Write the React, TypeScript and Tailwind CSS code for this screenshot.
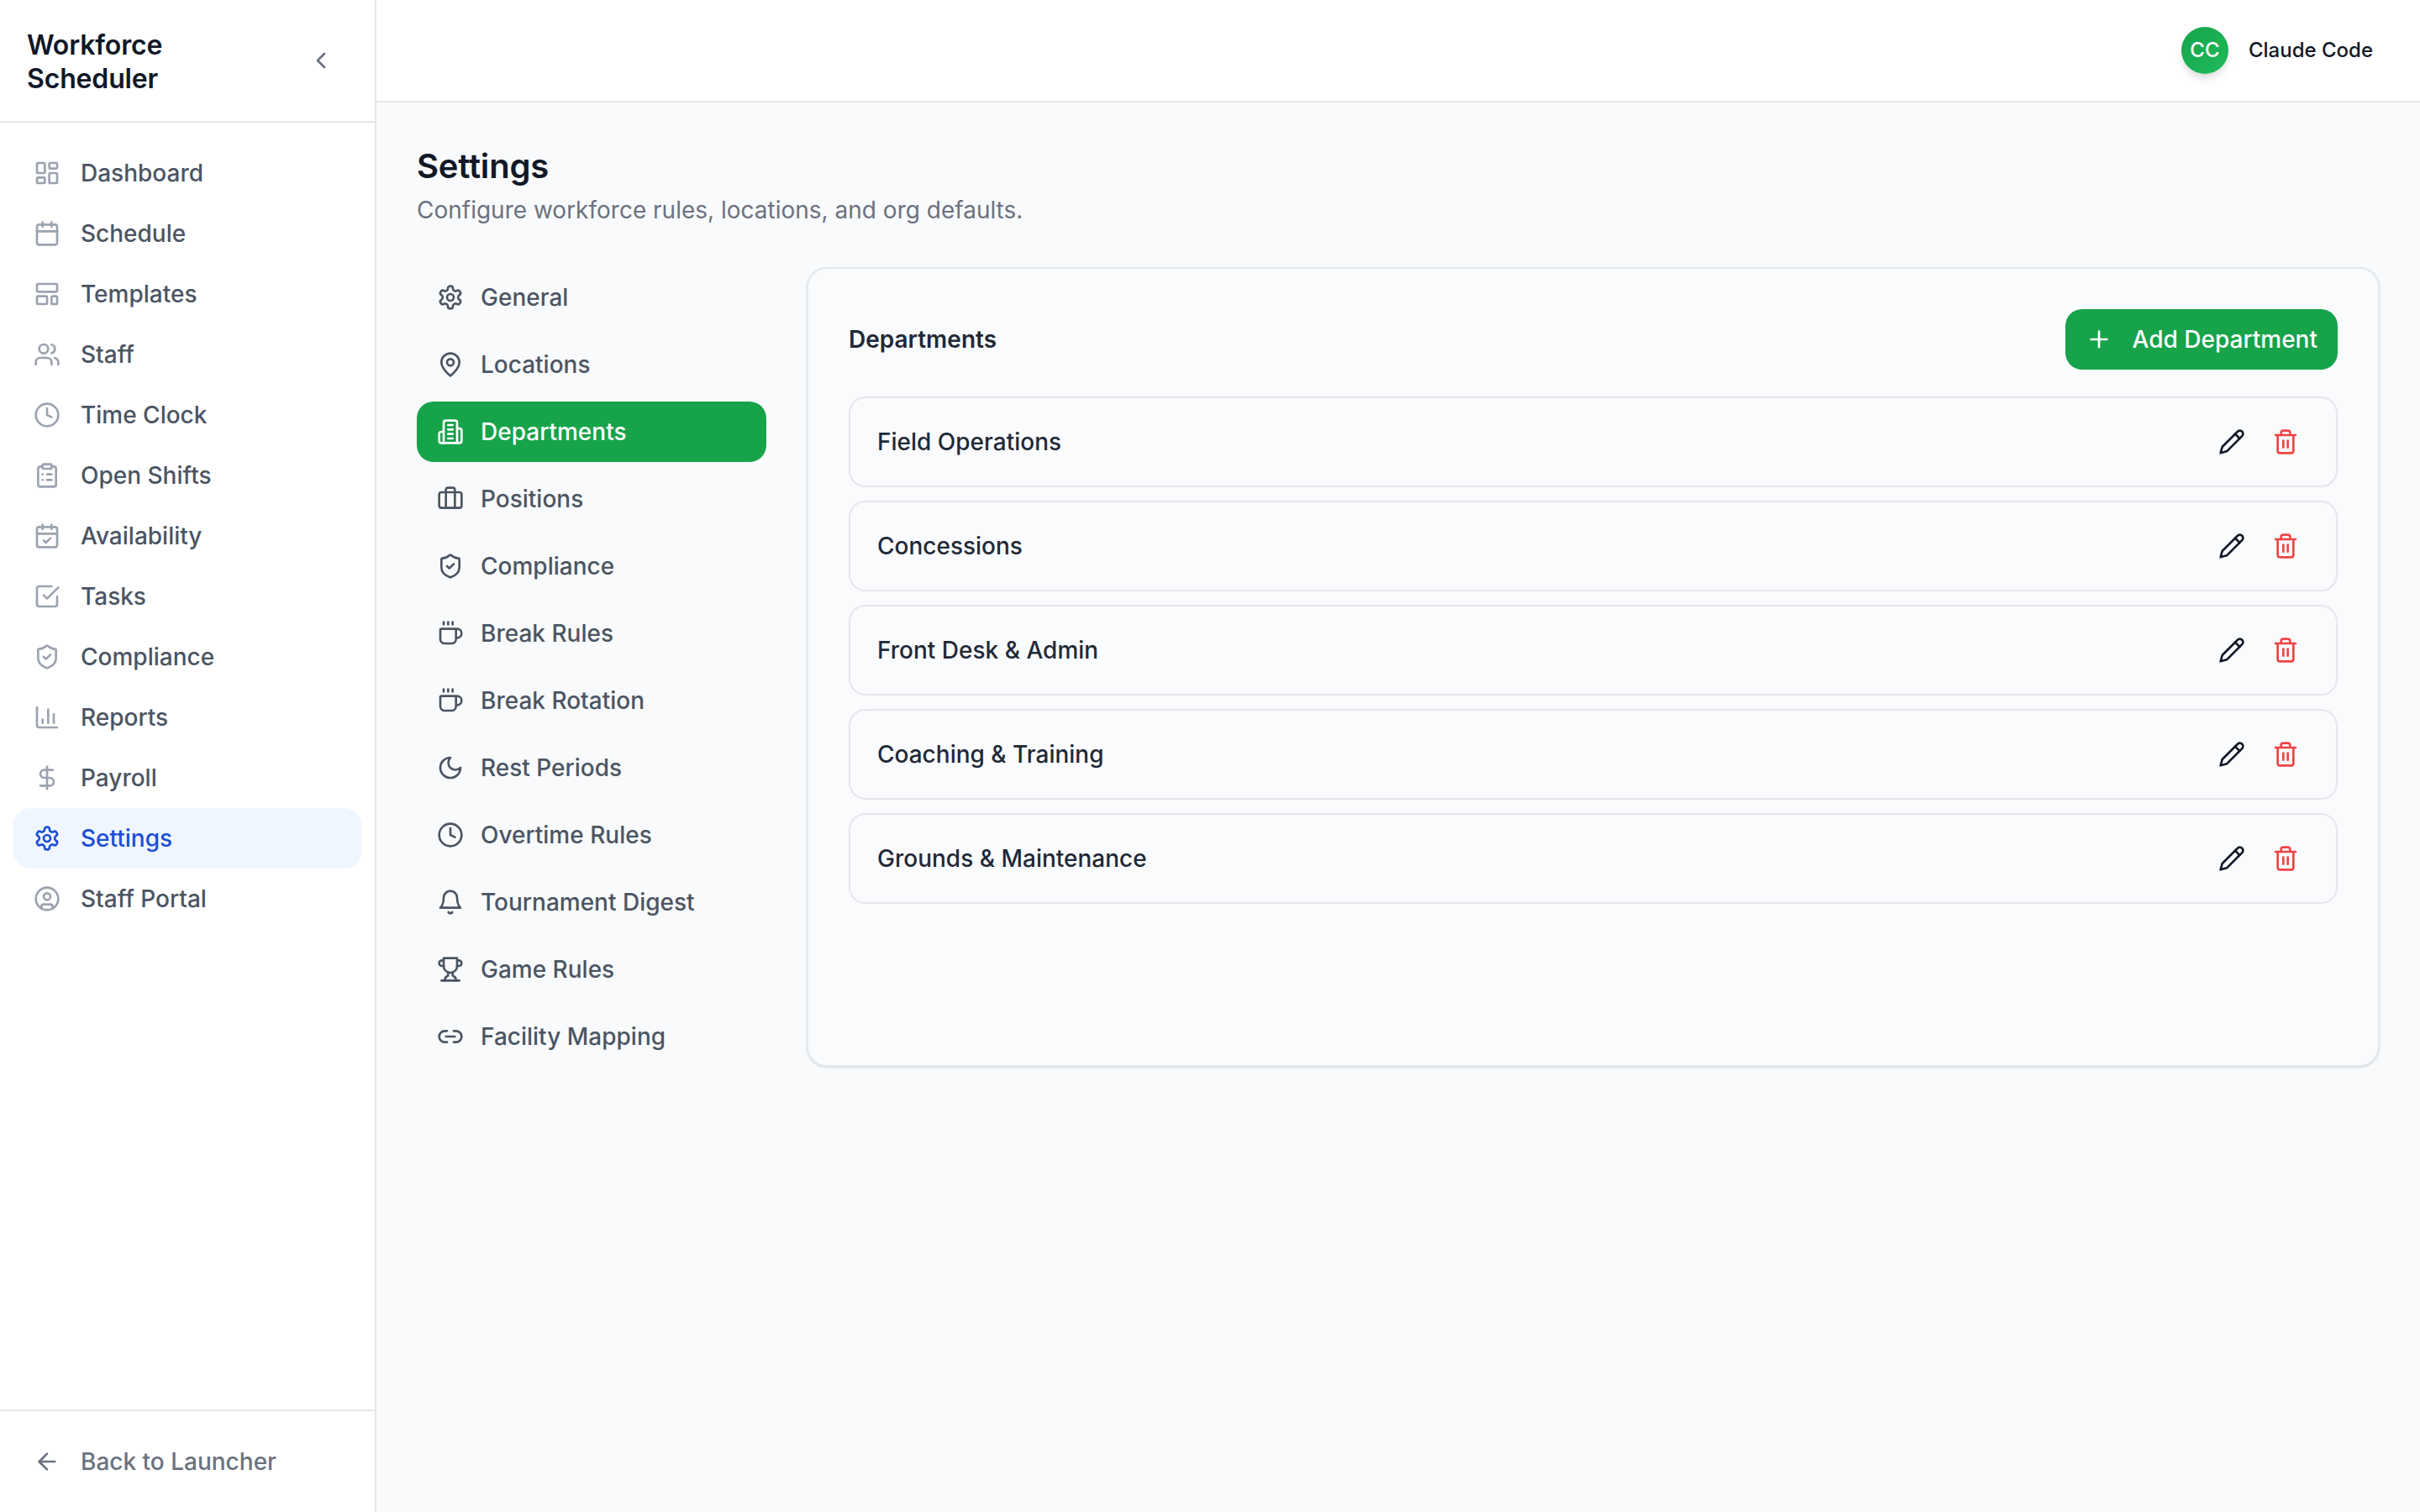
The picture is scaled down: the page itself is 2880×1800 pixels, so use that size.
import React from 'react';
import {
  ArrowLeft,
  Briefcase,
  Calendar,
  CalendarCheck,
  ChartColumn,
  ChevronLeft,
  CircleUser,
  ClipboardList,
  Clock,
  Coffee,
  DollarSign,
  LayoutDashboard,
  LayoutTemplate,
  Link2,
  Plus,
  ShieldCheck,
  Trash2,
  Users,
} from 'lucide-react';

type IconProps = { className?: string };

const Svg = ({ className, children }: IconProps & { children: React.ReactNode }) => (
  <svg
    viewBox="0 0 24 24"
    fill="none"
    stroke="currentColor"
    strokeWidth={2}
    strokeLinecap="round"
    strokeLinejoin="round"
    className={className}
  >
    {children}
  </svg>
);

// these follow the older lucide drawings, the installed package has redrawn them
const Gear = ({ className }: IconProps) => (
  <Svg className={className}>
    <path d="M12.22 2h-.44a2 2 0 0 0-2 2v.18a2 2 0 0 1-1 1.73l-.43.25a2 2 0 0 1-2 0l-.15-.08a2 2 0 0 0-2.73.73l-.22.38a2 2 0 0 0 .73 2.73l.15.1a2 2 0 0 1 1 1.72v.51a2 2 0 0 1-1 1.74l-.15.09a2 2 0 0 0-.73 2.73l.22.38a2 2 0 0 0 2.73.73l.15-.08a2 2 0 0 1 2 0l.43.25a2 2 0 0 1 1 1.73V20a2 2 0 0 0 2 2h.44a2 2 0 0 0 2-2v-.18a2 2 0 0 1 1-1.73l.43-.25a2 2 0 0 1 2 0l.15.08a2 2 0 0 0 2.73-.73l.22-.39a2 2 0 0 0-.73-2.73l-.15-.08a2 2 0 0 1-1-1.74v-.5a2 2 0 0 1 1-1.74l.15-.09a2 2 0 0 0 .73-2.73l-.22-.38a2 2 0 0 0-2.73-.73l-.15.08a2 2 0 0 1-2 0l-.43-.25a2 2 0 0 1-1-1.73V4a2 2 0 0 0-2-2z" />
    <circle cx="12" cy="12" r="3" />
  </Svg>
);

const Pin = ({ className }: IconProps) => (
  <Svg className={className}>
    <path d="M20 10c0 6-8 12-8 12s-8-6-8-12a8 8 0 0 1 16 0Z" />
    <circle cx="12" cy="10" r="3" />
  </Svg>
);

const Building = ({ className }: IconProps) => (
  <Svg className={className}>
    <path d="M6 22V4a2 2 0 0 1 2-2h8a2 2 0 0 1 2 2v18Z" />
    <path d="M6 12H4a2 2 0 0 0-2 2v6a2 2 0 0 0 2 2h2" />
    <path d="M18 9h2a2 2 0 0 1 2 2v9a2 2 0 0 1-2 2h-2" />
    <path d="M10 6h4" />
    <path d="M10 10h4" />
    <path d="M10 14h4" />
    <path d="M10 18h4" />
  </Svg>
);

const MoonIcon = ({ className }: IconProps) => (
  <Svg className={className}>
    <path d="M12 3a6 6 0 0 0 9 9 9 9 0 1 1-9-9Z" />
  </Svg>
);

const BellIcon = ({ className }: IconProps) => (
  <Svg className={className}>
    <path d="M6 8a6 6 0 0 1 12 0c0 7 3 9 3 9H3s3-2 3-9" />
    <path d="M10.3 21a1.94 1.94 0 0 0 3.4 0" />
  </Svg>
);

const TrophyIcon = ({ className }: IconProps) => (
  <Svg className={className}>
    <path d="M6 9H4.5a2.5 2.5 0 0 1 0-5H6" />
    <path d="M18 9h1.5a2.5 2.5 0 0 0 0-5H18" />
    <path d="M4 22h16" />
    <path d="M10 14.66V17c0 .55-.47.98-.97 1.21C7.85 18.75 7 20.24 7 22" />
    <path d="M14 14.66V17c0 .55.47.98.97 1.21C16.15 18.75 17 20.24 17 22" />
    <path d="M18 2H6v7a6 6 0 0 0 12 0V2Z" />
  </Svg>
);

const CheckBox = ({ className }: IconProps) => (
  <Svg className={className}>
    <path d="m9 11 3 3L22 4" />
    <path d="M21 12v7a2 2 0 0 1-2 2H5a2 2 0 0 1-2-2V5a2 2 0 0 1 2-2h11" />
  </Svg>
);

const PencilIcon = ({ className }: IconProps) => (
  <Svg className={className}>
    <path d="M17 3a2.85 2.83 0 1 1 4 4L7.5 20.5 2 22l1.5-5.5Z" />
    <path d="m15 5 4 4" />
  </Svg>
);

const mainNav = [
  { label: 'Dashboard', icon: LayoutDashboard },
  { label: 'Schedule', icon: Calendar },
  { label: 'Templates', icon: LayoutTemplate },
  { label: 'Staff', icon: Users },
  { label: 'Time Clock', icon: Clock },
  { label: 'Open Shifts', icon: ClipboardList },
  { label: 'Availability', icon: CalendarCheck },
  { label: 'Tasks', icon: CheckBox },
  { label: 'Compliance', icon: ShieldCheck },
  { label: 'Reports', icon: ChartColumn },
  { label: 'Payroll', icon: DollarSign },
  { label: 'Settings', icon: Gear, active: true },
  { label: 'Staff Portal', icon: CircleUser },
];

const settingsNav = [
  { label: 'General', icon: Gear },
  { label: 'Locations', icon: Pin },
  { label: 'Departments', icon: Building, active: true },
  { label: 'Positions', icon: Briefcase },
  { label: 'Compliance', icon: ShieldCheck },
  { label: 'Break Rules', icon: Coffee },
  { label: 'Break Rotation', icon: Coffee },
  { label: 'Rest Periods', icon: MoonIcon },
  { label: 'Overtime Rules', icon: Clock },
  { label: 'Tournament Digest', icon: BellIcon },
  { label: 'Game Rules', icon: TrophyIcon },
  { label: 'Facility Mapping', icon: Link2 },
];

const departments = ['Field Operations', 'Concessions', 'Front Desk & Admin', 'Coaching & Training', 'Grounds & Maintenance'];

const App = () => {
  return (
    <div className="flex h-[1800px] w-[2880px] overflow-hidden bg-[#f9fafb] font-['Inter',sans-serif]">
      <aside className="flex w-[448px] shrink-0 flex-col border-r-2 border-[#e5e7eb] bg-white">
        <div className="flex h-[146px] shrink-0 items-center justify-between border-b-2 border-[#e5e7eb] pl-8 pr-[48px]">
          <div className="w-[200px] pt-1 text-[32px] font-semibold leading-[40px] tracking-[-0.005em] text-[#111827]">Workforce Scheduler</div>
          <ChevronLeft className="size-8 text-[#6b7280]" />
        </div>
        <nav className="flex flex-1 flex-col px-4 pt-[24px]">
          {mainNav.map((item) => (
            <div
              key={item.label}
              className={`flex h-[72px] items-center gap-6 rounded-[20px] px-6 text-[28px] font-medium ${
                item.active ? 'bg-[#eff6ff] text-[#1d4ed8]' : 'text-[#4b5563]'
              }`}
            >
              <item.icon className={`size-8 shrink-0 ${item.active ? 'text-[#1d4ed8]' : 'text-[#9ca3af]'}`} />
              <span>{item.label}</span>
            </div>
          ))}
        </nav>
        <div className="flex h-[122px] shrink-0 items-center gap-6 border-t-2 border-[#e5e7eb] px-10 text-[28px] font-medium text-[#6b7280]">
          <ArrowLeft className="size-8" />
          <span>Back to Launcher</span>
        </div>
      </aside>
      <div className="flex min-w-0 flex-1 flex-col">
        <header className="flex h-[122px] shrink-0 items-center justify-end gap-6 border-b-2 border-[#e5e7eb] bg-white pr-[56px]">
          <div className="flex size-14 items-center justify-center rounded-full bg-linear-to-br from-[#16a34a] to-[#1fbb5c] text-[24px] font-medium text-white shadow-[0_8px_12px_-2px_rgba(0,0,0,0.1),0_4px_8px_-4px_rgba(0,0,0,0.1)]">CC</div>
          <span className="text-[24px] font-medium text-[#111827]">Claude Code</span>
        </header>
        <main className="flex-1 px-12 pt-[48px]">
          <h1 className="text-[40px] font-semibold leading-[56px] tracking-[-0.005em] text-[#111827]">Settings</h1>
          <p className="mt-1 text-[28px] leading-[40px] text-[#6b7280]">Configure workforce rules, locations, and org defaults.</p>
          <div className="mt-[48px] flex items-start gap-12">
            <nav className="flex w-[416px] shrink-0 flex-col gap-2">
              {settingsNav.map((item) => (
                <div
                  key={item.label}
                  className={`flex h-[72px] items-center gap-5 rounded-[20px] px-6 text-[28px] font-medium ${
                    item.active ? 'bg-[#16a34a] text-white' : 'text-[#4b5563]'
                  }`}
                >
                  <item.icon className="size-8 shrink-0" />
                  <span>{item.label}</span>
                </div>
              ))}
            </nav>
            <section className="h-[952px] flex-1 rounded-[24px] border-2 border-[#e2e8f0] bg-[#fafbfd] p-12 shadow-sm">
              <div className="flex items-center justify-between">
                <h2 className="text-[28px] font-semibold text-[#1f2937]">Departments</h2>
                <button className="flex h-[72px] items-center gap-6 rounded-[20px] bg-[#16a34a] px-6 text-[28px] font-medium text-white">
                  <Plus className="size-8" />
                  Add Department
                </button>
              </div>
              <div className="mt-8 flex flex-col gap-4">
                {departments.map((name) => (
                  <div key={name} className="flex h-[108px] items-center justify-between rounded-[20px] border-2 border-[#e5e7eb] pl-8 pr-[44px]">
                    <span className="text-[28px] font-medium text-[#1f2937]">{name}</span>
                    <div className="flex items-center gap-8">
                      <PencilIcon className="size-8 text-[#111827]" />
                      <Trash2 className="size-8 text-[#ef4444]" />
                    </div>
                  </div>
                ))}
              </div>
            </section>
          </div>
        </main>
      </div>
    </div>
  );
};

export default App;
